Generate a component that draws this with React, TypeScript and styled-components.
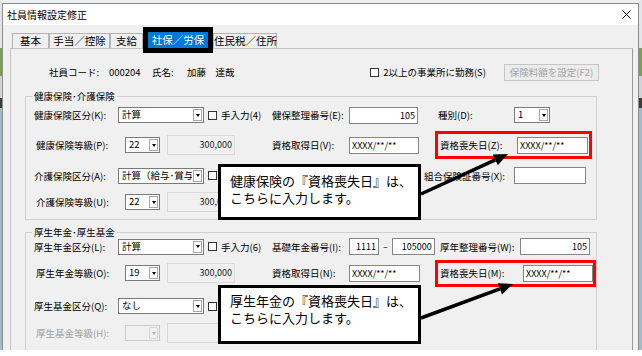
import styled, { createGlobalStyle } from "styled-components";

const GlobalStyle = createGlobalStyle`
  * { box-sizing: border-box; }
  html, body {
    margin: 0;
    padding: 0;
    background: #ffffff;
  }
  body {
    font-family: "Noto Sans CJK JP", "Noto Sans", sans-serif;
    color: #000000;
  }
`;

const Screen = styled.div`
  position: relative;
  display: flex;
  width: 642px;
  height: 350px;
  padding-top: 3px;
  background: #eceeef;
  overflow: hidden;
`;

const DesktopEdge = styled.div<{ $w: number }>`
  width: ${(p) => p.$w}px;
  flex-shrink: 0;
  margin-top: -3px;
  background: linear-gradient(
    to bottom,
    #e2e4e6 0 48px,
    #7c9e55 48px 76px,
    #d0d2d4 76px 98px,
    #3c3c3c 98px 108px,
    #a4bcc8 108px 100%
  );
`;

const Window = styled.div`
  flex: 1;
  display: flex;
  flex-direction: column;
  min-height: 0;
  overflow: hidden;
  border: 1px solid #8c8c8c;
  border-bottom: none;
  background: #f0f0f0;
`;

const TitleBar = styled.div`
  display: flex;
  flex-shrink: 0;
  align-items: center;
  justify-content: space-between;
  height: 21px;
  padding: 0 7px 0 4px;
  background: #ffffff;
`;

const Title = styled.span`
  font-size: 10px;
  line-height: 12px;
`;

const WindowBody = styled.div`
  flex: 1;
  display: flex;
  flex-direction: column;
  min-height: 0;
  padding: 8px 5px 0 7px;
`;

const TabStrip = styled.div`
  display: flex;
  flex-shrink: 0;
  align-items: flex-end;
  height: 15px;
  padding-left: 2px;
`;

const Tab = styled.div<{ $w: number; $active?: boolean }>`
  position: relative;
  width: ${(p) => p.$w}px;
  height: ${(p) => (p.$active ? 16 : 15)}px;
  margin: ${(p) => (p.$active ? "0 5px" : "0")};
  border: 1px solid ${(p) => (p.$active ? "#0078d7" : "#b4b4b4")};
  border-bottom: none;
  background: ${(p) => (p.$active ? "#0078d7" : "#f0f0f0")};
  color: ${(p) => (p.$active ? "#ffffff" : "#000000")};
  outline: ${(p) => (p.$active ? "5px solid #000000" : "none")};
  z-index: ${(p) => (p.$active ? 2 : 0)};
  font-size: 10.5px;
  line-height: 14px;
  text-align: center;
  white-space: nowrap;
`;

const TabPanel = styled.div`
  flex: 1;
  display: flex;
  flex-direction: column;
  min-height: 0;
  padding: 12px 0 0 14px;
  border: 1px solid #c2c2c2;
  border-right-color: #9a9a9a;
  border-bottom: none;
  background: #f0f0f0;
`;

const HeaderRow = styled.div`
  display: flex;
  flex-shrink: 0;
  align-items: center;
  height: 22px;
  padding-left: 24px;
  font-size: 9.5px;
`;

const HeaderText = styled.span<{ $w?: number }>`
  width: ${(p) => (p.$w ? `${p.$w}px` : "auto")};
  flex: ${(p) => (p.$w ? "0 0 auto" : "1")};
  white-space: nowrap;
`;

const CommandButton = styled.button`
  width: 95px;
  height: 17px;
  margin: 0 33px 0 18px;
  padding: 0;
  border: 1px solid #c6c6c6;
  background: #ececec;
  color: #a3a3a3;
  font-family: inherit;
  font-size: 9.5px;
  line-height: 15px;
`;

const CheckField = styled.span`
  display: inline-flex;
  align-items: center;
  gap: 4px;
  font-size: 9.5px;
  white-space: nowrap;
`;

const CheckBox = styled.span`
  width: 9px;
  height: 9px;
  flex-shrink: 0;
  border: 1px solid #333333;
  background: #ffffff;
`;

const Group = styled.fieldset<{ $mt: number; $pb: number }>`
  flex-shrink: 0;
  width: 572px;
  min-width: 0;
  margin: ${(p) => p.$mt}px 0 0 0;
  padding: 0 0 ${(p) => p.$pb}px 0;
  border: 1px solid #d0d0d0;
`;

const GroupLegend = styled.legend`
  margin-left: 6px;
  padding: 0 2px;
  font-size: 9.5px;
  line-height: 12px;
`;

const FieldRow = styled.div<{ $cols: string; $h: number }>`
  display: grid;
  grid-template-columns: ${(p) => p.$cols};
  align-items: center;
  justify-items: start;
  height: ${(p) => p.$h}px;
  padding-left: 8px;
`;

const FieldLabel = styled.span<{ $col?: string; $indent?: number; $disabled?: boolean; $right?: number }>`
  grid-column: ${(p) => p.$col ?? "auto"};
  justify-self: ${(p) => (p.$right !== undefined ? "end" : "start")};
  padding-left: ${(p) => p.$indent ?? 0}px;
  padding-right: ${(p) => p.$right ?? 0}px;
  color: ${(p) => (p.$disabled ? "#a0a0a0" : "#000000")};
  font-size: 9.5px;
  white-space: nowrap;
`;

const ComboFrame = styled.div<{ $w: number; $ml?: number; $disabled?: boolean }>`
  display: flex;
  width: ${(p) => p.$w}px;
  height: 16px;
  margin-left: ${(p) => p.$ml ?? 0}px;
  border: 1px solid ${(p) => (p.$disabled ? "#cccccc" : "#7a7a7a")};
  background: ${(p) => (p.$disabled ? "#f0f0f0" : "#ffffff")};
`;

const ComboText = styled.span`
  flex: 1;
  padding: 0 3px;
  overflow: hidden;
  font-size: 9.5px;
  line-height: 13px;
  white-space: nowrap;
`;

const ComboButton = styled.span<{ $disabled?: boolean }>`
  display: flex;
  align-items: center;
  justify-content: center;
  width: 9px;
  margin: 1px;
  border: 1px solid ${(p) => (p.$disabled ? "#d8d8d8" : "#a8a8a8")};
  background: ${(p) => (p.$disabled ? "#f0f0f0" : "#ffffff")};
  &::after {
    content: "";
    border-left: 2.5px solid transparent;
    border-right: 2.5px solid transparent;
    border-top: 3px solid ${(p) => (p.$disabled ? "#b0b0b0" : "#000000")};
  }
`;

const TextBox = styled.div<{ $w: number; $right?: boolean }>`
  width: ${(p) => p.$w}px;
  height: 17px;
  padding: 0 2px;
  border: 1px solid #858585;
  background: #ffffff;
  overflow: hidden;
  font-size: 9px;
  line-height: 15px;
  text-align: ${(p) => (p.$right ? "right" : "left")};
  white-space: nowrap;
`;

const ReadOnlyBox = styled.div`
  width: 68px;
  height: 20px;
  padding-right: 2px;
  border: 1px solid #d9d9d9;
  font-size: 9px;
  line-height: 18px;
  text-align: right;
  color: #222222;
`;

const GradePair = styled.div`
  grid-column: span 2;
  display: flex;
  align-items: center;
  gap: 7px;
`;

const NumberPair = styled.div`
  display: flex;
  align-items: center;
  gap: 4px;
  font-size: 9px;
`;

const RedFrame = styled.div<{ $cols: string; $h: number; $pr: number }>`
  grid-column: span 2;
  display: grid;
  grid-template-columns: ${(p) => p.$cols};
  align-items: center;
  height: ${(p) => p.$h}px;
  padding: 0 ${(p) => p.$pr}px 0 2px;
  border: 3px solid #ff0000;
`;

const Callout = styled.div<{ $top: number; $h: number; $pt: number }>`
  position: absolute;
  left: 218px;
  top: ${(p) => p.$top}px;
  width: 203px;
  height: ${(p) => p.$h}px;
  padding: ${(p) => p.$pt}px 0 0 9px;
  border: 3px solid #000000;
  background: #ffffff;
  font-size: 13px;
  line-height: 17px;
  white-space: nowrap;
  z-index: 5;
`;

const ArrowLayer = styled.svg`
  position: absolute;
  left: 0;
  top: 0;
  z-index: 6;
  pointer-events: none;
`;

const Combo = ({ w, value, ml, disabled }: { w: number; value: string; ml?: number; disabled?: boolean }) => (
  <ComboFrame $w={w} $ml={ml} $disabled={disabled}>
    <ComboText>{value}</ComboText>
    <ComboButton $disabled={disabled} />
  </ComboFrame>
);

// the label is left out where the callout hides it anyway
const Check = ({ label }: { label?: string }) => (
  <CheckField>
    <CheckBox />
    {label}
  </CheckField>
);

const HEALTH_COLS = "84px 90px 64px 77px 86px 79px 78px";
const PENSION_COLS = "84px 90px 64px 77px 86px 85px 73px";

export default function App() {
  return (
    <>
      <GlobalStyle />
      <Screen>
        <DesktopEdge $w={2} />
        <Window>
          <TitleBar>
            <Title>社員情報設定修正</Title>
            <svg width="9" height="9" viewBox="0 0 9 9">
              <path d="M0.5 0.5 L8.5 8.5 M8.5 0.5 L0.5 8.5" stroke="#000" strokeWidth="1" />
            </svg>
          </TitleBar>
          <WindowBody>
            <TabStrip>
              <Tab $w={37}>基本</Tab>
              <Tab $w={61}>手当／控除</Tab>
              <Tab $w={33}>支給</Tab>
              <Tab $w={60} $active>社保／労保</Tab>
              <Tab $w={64}>住民税／住所</Tab>
            </TabStrip>
            <TabPanel>
              <HeaderRow>
                <HeaderText $w={60}>社員コード:</HeaderText>
                <HeaderText $w={43}>000204</HeaderText>
                <HeaderText $w={35}>氏名:</HeaderText>
                <HeaderText>加藤　達哉</HeaderText>
                <Check label="2以上の事業所に勤務(S)" />
                <CommandButton disabled>保険料額を設定(F2)</CommandButton>
              </HeaderRow>

              <Group $mt={7} $pb={4}>
                <GroupLegend>健康保険･介護保険</GroupLegend>
                <FieldRow $cols={HEALTH_COLS} $h={26}>
                  <FieldLabel>健康保険区分(K):</FieldLabel>
                  <Combo w={86} value="計算" />
                  <Check label="手入力(4)" />
                  <FieldLabel>健保整理番号(E):</FieldLabel>
                  <TextBox $w={69} $right>105</TextBox>
                  <FieldLabel $indent={3}>種別(D):</FieldLabel>
                  <Combo w={36} value="1" />
                </FieldRow>
                <FieldRow $cols={HEALTH_COLS} $h={34}>
                  <FieldLabel $indent={2}>健康保険等級(P):</FieldLabel>
                  <GradePair>
                    <Combo w={35} ml={7} value="22" />
                    <ReadOnlyBox>300,000</ReadOnlyBox>
                  </GradePair>
                  <FieldLabel>資格取得日(V):</FieldLabel>
                  <TextBox $w={70}>XXXX/**/**</TextBox>
                  <RedFrame $cols="77px 71px" $h={28} $pr={1}>
                    <FieldLabel>資格喪失日(Z):</FieldLabel>
                    <TextBox $w={71}>XXXX/**/**</TextBox>
                  </RedFrame>
                </FieldRow>
                <FieldRow $cols={HEALTH_COLS} $h={27}>
                  <FieldLabel>介護保険区分(A):</FieldLabel>
                  <Combo w={86} value="計算（給与･賞与）" />
                  <Check />
                  <FieldLabel $col="5 / 7" $right={9}>組合保険証番号(X):</FieldLabel>
                  <TextBox $w={72} />
                </FieldRow>
                <FieldRow $cols={HEALTH_COLS} $h={26}>
                  <FieldLabel $indent={2}>介護保険等級(U):</FieldLabel>
                  <GradePair>
                    <Combo w={35} ml={7} value="22" />
                    <ReadOnlyBox>300,000</ReadOnlyBox>
                  </GradePair>
                </FieldRow>
              </Group>

              <Group $mt={6} $pb={12}>
                <GroupLegend>厚生年金･厚生基金</GroupLegend>
                <FieldRow $cols={PENSION_COLS} $h={17}>
                  <FieldLabel>厚生年金区分(L):</FieldLabel>
                  <Combo w={86} value="計算" />
                  <Check label="手入力(6)" />
                  <FieldLabel>基礎年金番号(I):</FieldLabel>
                  <NumberPair>
                    <TextBox $w={30} $right>1111</TextBox>
                    –
                    <TextBox $w={43} $right>105000</TextBox>
                  </NumberPair>
                  <FieldLabel $indent={5}>厚年整理番号(W):</FieldLabel>
                  <TextBox $w={70} $right>105</TextBox>
                </FieldRow>
                <FieldRow $cols={PENSION_COLS} $h={36}>
                  <FieldLabel $indent={2}>厚生年金等級(O):</FieldLabel>
                  <GradePair>
                    <Combo w={35} ml={7} value="19" />
                    <ReadOnlyBox>300,000</ReadOnlyBox>
                  </GradePair>
                  <FieldLabel>資格取得日(N):</FieldLabel>
                  <TextBox $w={71}>XXXX/**/**</TextBox>
                  <RedFrame $cols="83px 70px" $h={27} $pr={0}>
                    <FieldLabel>資格喪失日(M):</FieldLabel>
                    <TextBox $w={70}>XXXX/**/**</TextBox>
                  </RedFrame>
                </FieldRow>
                <FieldRow $cols={PENSION_COLS} $h={30}>
                  <FieldLabel>厚生基金区分(Q):</FieldLabel>
                  <Combo w={86} value="なし" />
                  <Check />
                </FieldRow>
                <FieldRow $cols={PENSION_COLS} $h={24}>
                  <FieldLabel $indent={2} $disabled>厚生基金等級(H):</FieldLabel>
                  <GradePair>
                    <Combo w={35} ml={7} value="" disabled />
                    <ReadOnlyBox />
                  </GradePair>
                </FieldRow>
              </Group>
            </TabPanel>
          </WindowBody>
        </Window>
        <DesktopEdge $w={3} />

        <Callout $top={164} $h={56} $pt={5}>
          健康保険の『資格喪失日』は、
          <br />
          こちらに入力します。
        </Callout>
        <Callout $top={285} $h={59} $pt={4}>
          厚生年金の『資格喪失日』は、
          <br />
          こちらに入力します。
        </Callout>

        <ArrowLayer width="642" height="350" viewBox="0 0 642 350">
          <line x1="421" y1="194" x2="495.3" y2="159.9" stroke="#000" strokeWidth="3.5" />
          <polygon points="508,154 497.8,165.3 492.8,154.4" fill="#000" />
          <line x1="421" y1="318" x2="499.9" y2="288.9" stroke="#000" strokeWidth="3.5" />
          <polygon points="513,284 502,294.5 497.8,283.3" fill="#000" />
        </ArrowLayer>
      </Screen>
    </>
  );
}
